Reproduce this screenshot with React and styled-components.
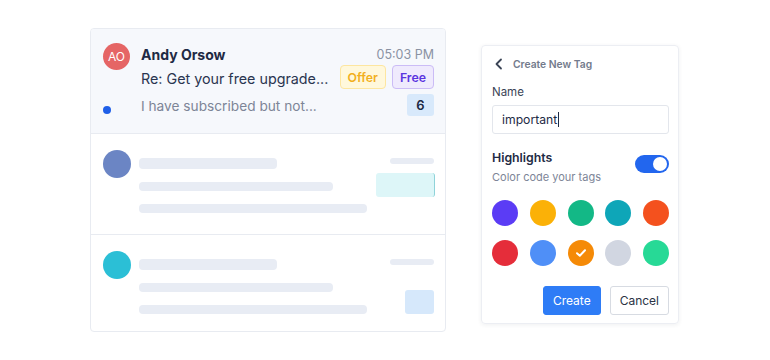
import styled, { createGlobalStyle } from "styled-components";

const GlobalStyle = createGlobalStyle`
  html, body {
    margin: 0;
    background: #ffffff;
    font-family: Inter, "Noto Sans", sans-serif;
  }
`;

const Page = styled.div`
  display: flex;
  align-items: flex-start;
  gap: 35px;
  padding: 28px 0 0 90px;
  width: 770px;
  height: 360px;
  box-sizing: border-box;
`;

const MailCard = styled.div`
  width: 356px;
  border: 1px solid #e8ebf1;
  border-radius: 4px;
  overflow: hidden;
  box-sizing: border-box;
`;

const MailRow = styled.div`
  display: flex;
  gap: 11px;
  height: 105px;
  padding: 14px 11px 0 12px;
  background: #f6f8fc;
  border-bottom: 1px solid #e8ebf1;
  box-sizing: border-box;
`;

const AvatarCol = styled.div`
  display: flex;
  flex-direction: column;
  width: 27px;
`;

const Avatar = styled.div`
  width: ${(p) => p.size || 27}px;
  height: ${(p) => p.size || 27}px;
  border-radius: 50%;
  background: ${(p) => p.color};
  color: #fff;
  font-size: 12px;
  display: grid;
  place-items: center;
  flex-shrink: 0;
`;

const UnreadDot = styled.span`
  width: 8px;
  height: 8px;
  border-radius: 50%;
  background: #1f5fe8;
  margin-top: 36px;
`;

const MailBody = styled.div`
  flex: 1;
  display: flex;
  flex-direction: column;
`;

const Line = styled.div`
  display: flex;
  align-items: center;
  justify-content: space-between;
  height: ${(p) => p.h}px;
  margin-top: ${(p) => p.mt || 0}px;
`;

const Sender = styled.span`
  font-size: 14px;
  font-weight: 700;
  color: #1e2a44;
`;

const Time = styled.span`
  font-size: 12.5px;
  color: #8a92a3;
`;

const Subject = styled.span`
  font-size: 14.3px;
  color: #2a3550;
  white-space: nowrap;
  padding-top: 2px;
`;

const Preview = styled.span`
  font-size: 13.7px;
  color: #7d8597;
  white-space: nowrap;
  padding-top: 2px;
`;

const Tags = styled.div`
  display: flex;
  gap: 6px;
`;

const Tag = styled.span`
  height: 24px;
  padding: 0 7px;
  display: grid;
  place-items: center;
  font-size: 12.3px;
  font-weight: 600;
  border-radius: 4px;
  border: 1px solid ${(p) => p.border};
  background: ${(p) => p.bg};
  color: ${(p) => p.fg};
  box-sizing: border-box;
`;

const Count = styled.span`
  width: 27px;
  height: 22px;
  display: grid;
  place-items: center;
  border-radius: 3px;
  background: #d8e9fb;
  color: #1e2a44;
  font-size: 13px;
  font-weight: 600;
`;

const SkeletonRow = styled.div`
  display: flex;
  gap: 8px;
  height: ${(p) => p.h}px;
  padding: 16px 11px 0 12px;
  border-bottom: ${(p) => (p.last ? "none" : "1px solid #e8ebf1")};
  box-sizing: border-box;
`;

const Bars = styled.div`
  flex: 1;
  min-width: 0;
  display: flex;
  flex-direction: column;
  gap: 13px;
  padding-top: 8px;
`;

const Bar = styled.div`
  width: ${(p) => p.w}px;
  height: ${(p) => p.h}px;
  border-radius: 4px;
  background: #e8ecf4;
`;

const SideCol = styled.div`
  display: flex;
  flex-direction: column;
  align-items: flex-end;
  padding-top: 8px;
`;

const Block = styled.div`
  width: ${(p) => p.w}px;
  height: 24px;
  margin-top: ${(p) => p.mt}px;
  margin-right: ${(p) => (p.edge ? -1 : 0)}px;
  border-radius: 3px;
  background: ${(p) => p.bg};
  border-right: ${(p) => (p.edge ? `1px solid ${p.edge}` : "none")};
`;

const Panel = styled.div`
  margin-top: 17px;
  width: 198px;
  height: 279px;
  padding: 11px 9px 0 10px;
  border: 1px solid #eceef3;
  border-radius: 4px;
  box-shadow: 0 1px 4px rgba(30, 40, 60, 0.07);
  box-sizing: border-box;
  display: flex;
  flex-direction: column;
`;

const PanelHead = styled.div`
  display: flex;
  align-items: center;
  gap: 9px;
  height: 14px;
  padding-left: 2px;
  font-size: 10.3px;
  font-weight: 600;
  color: #737b8c;
`;

const Label = styled.div`
  margin-top: 14px;
  font-size: 11.5px;
  color: #3b4456;
`;

const Input = styled.div`
  margin-top: 6px;
  height: 29px;
  border: 1px solid #e3e6ec;
  border-radius: 3px;
  padding: 0 9px;
  display: flex;
  align-items: center;
  font-size: 12.2px;
  color: #1e2a44;
  box-sizing: border-box;
`;

const Caret = styled.span`
  display: inline-block;
  width: 1px;
  height: 15px;
  background: #1e2a44;
  margin-left: 1px;
`;

const HighlightRow = styled.div`
  display: flex;
  align-items: flex-start;
  justify-content: space-between;
  margin-top: 16px;
`;

const HighlightTitle = styled.div`
  font-size: 12.3px;
  font-weight: 600;
  color: #1e2a44;
`;

const HighlightSub = styled.div`
  font-size: 11px;
  color: #7d8597;
  margin-top: 5px;
`;

const Switch = styled.div`
  width: 34px;
  height: 18px;
  border-radius: 9px;
  background: #2266ee;
  margin-top: 5px;
  display: flex;
  align-items: center;
  justify-content: flex-end;
  padding: 0 2px;
  box-sizing: border-box;

  &::after {
    content: "";
    width: 14px;
    height: 14px;
    border-radius: 50%;
    background: #fff;
  }
`;

const Swatches = styled.div`
  display: grid;
  grid-template-columns: repeat(5, 26px);
  justify-content: space-between;
  row-gap: 14px;
  margin-top: 16px;
`;

const Swatch = styled.div`
  width: 26px;
  height: 26px;
  border-radius: 50%;
  background: ${(p) => p.color};
  display: grid;
  place-items: center;
`;

const Actions = styled.div`
  display: flex;
  justify-content: flex-end;
  gap: 9px;
  margin-top: 20px;
`;

const Button = styled.button`
  height: 29px;
  padding: 0 9px;
  border-radius: 3px;
  font-family: inherit;
  font-size: 12px;
  border: 1px solid ${(p) => (p.primary ? "#2e7cf6" : "#d7dbe2")};
  background: ${(p) => (p.primary ? "#2e7cf6" : "#fff")};
  color: ${(p) => (p.primary ? "#fff" : "#2a3344")};
`;

const swatchColors = [
  "#5b3cf5", "#fbb107", "#13b886", "#0ea6b8", "#f4511e",
  "#e52d3a", "#4f8ff7", "#f58a07", "#d1d6e1", "#27d996",
];

export default function App() {
  return (
    <>
      <GlobalStyle />
      <Page>
        <MailCard>
          <MailRow>
            <AvatarCol>
              <Avatar color="#e56565">AO</Avatar>
              <UnreadDot />
            </AvatarCol>
            <MailBody>
              <Line h={22}>
                <Sender>Andy Orsow</Sender>
                <Time>05:03 PM</Time>
              </Line>
              <Line h={24}>
                <Subject>Re: Get your free upgrade...</Subject>
                <Tags>
                  <Tag bg="#fff8dc" border="#fde6a0" fg="#f2b01e">Offer</Tag>
                  <Tag bg="#efeafd" border="#cbbcf6" fg="#5b35e0">Free</Tag>
                </Tags>
              </Line>
              <Line h={22} mt={5}>
                <Preview>I have subscribed but not...</Preview>
                <Count>6</Count>
              </Line>
            </MailBody>
          </MailRow>

          <SkeletonRow h={101}>
            <Avatar color="#6b85c4" size={28} />
            <Bars>
              <Bar w={138} h={11} />
              <Bar w={194} h={9} />
              <Bar w={228} h={9} />
            </Bars>
            <SideCol>
              <Bar w={44} h={6} />
              <Block w={58} mt={9} bg="#ddf6f8" edge="#8fd3d9" />
            </SideCol>
          </SkeletonRow>

          <SkeletonRow h={96} last>
            <Avatar color="#2bbfd6" size={28} />
            <Bars>
              <Bar w={138} h={11} />
              <Bar w={194} h={9} />
              <Bar w={228} h={9} />
            </Bars>
            <SideCol>
              <Bar w={44} h={6} />
              <Block w={29} mt={25} bg="#d6e8fb" />
            </SideCol>
          </SkeletonRow>
        </MailCard>

        <Panel>
          <PanelHead>
            <svg width="10" height="12" viewBox="0 0 10 12">
              <path d="M7 1.5 L2.5 6 L7 10.5" fill="none" stroke="#3b4456" strokeWidth="1.8" strokeLinecap="round" strokeLinejoin="round" />
            </svg>
            Create New Tag
          </PanelHead>
          <Label>Name</Label>
          <Input>
            important<Caret />
          </Input>
          <HighlightRow>
            <div>
              <HighlightTitle>Highlights</HighlightTitle>
              <HighlightSub>Color code your tags</HighlightSub>
            </div>
            <Switch />
          </HighlightRow>
          <Swatches>
            {swatchColors.map((c, i) => (
              <Swatch key={c} color={c}>
                {i === 7 && (
                  <svg width="12" height="10" viewBox="0 0 12 10">
                    <path d="M2 5.2 L4.8 7.8 L10 2.2" fill="none" stroke="#fff" strokeWidth="2" strokeLinecap="round" strokeLinejoin="round" />
                  </svg>
                )}
              </Swatch>
            ))}
          </Swatches>
          <Actions>
            <Button primary>Create</Button>
            <Button>Cancel</Button>
          </Actions>
        </Panel>
      </Page>
    </>
  );
}
